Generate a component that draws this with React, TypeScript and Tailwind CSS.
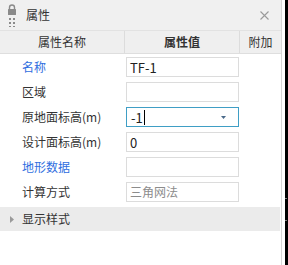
type Row = {
  label: string;
  value: string;
  blue?: boolean;
  kind?: "text" | "select" | "readonly";
};

const ROWS: Row[] = [
  { label: "名称", value: "TF-1", blue: true },
  { label: "区域", value: "" },
  { label: "原地面标高(m)", value: "-1", kind: "select" },
  { label: "设计面标高(m)", value: "0" },
  { label: "地形数据", value: "", blue: true },
  { label: "计算方式", value: "三角网法", kind: "readonly" },
];

const FONT = "font-['Microsoft_YaHei','Noto_Sans_CJK_SC',sans-serif]";

function LockGrip() {
  return (
    <svg width="10" height="24" viewBox="0 0 10 24" className="text-[#8a8a8a]" fill="currentColor">
      <path d="M2.5 6V4.5a2.5 2.5 0 0 1 5 0V6" fill="none" stroke="currentColor" strokeWidth="1.4" />
      <rect x="1" y="6" width="8" height="6" rx="0.5" />
      <rect x="2" y="15" width="2" height="2" />
      <rect x="6" y="15" width="2" height="2" />
      <rect x="2" y="19" width="2" height="2" />
      <rect x="6" y="19" width="2" height="2" />
      <rect x="2" y="23" width="2" height="1" />
      <rect x="6" y="23" width="2" height="1" />
    </svg>
  );
}

function ValueBox({ row }: { row: Row }) {
  if (row.kind === "select") {
    return (
      <div className="flex h-[20px] w-[113px] items-center border border-[#3f9ec5] bg-white pl-[4px] pr-[12px]">
        <span className="text-[13px] leading-none text-[#222]">{row.value}</span>
        <span className="ml-[1px] h-[15px] w-[1px] bg-black" />
        <span className="flex-1" />
        <svg width="5" height="3" viewBox="0 0 5 3">
          <path d="M0 0h5L2.5 3z" fill="#4a6a8a" />
        </svg>
      </div>
    );
  }
  return (
    <div className="flex h-[20px] w-[113px] items-center border border-[#dcdcdc] bg-white px-[3px]">
      <span
        className={`leading-none ${
          row.kind === "readonly" ? "text-[12px] text-[#8c8c8c]" : "text-[13px] text-[#222]"
        }`}
      >
        {row.value}
      </span>
    </div>
  );
}

export default function App() {
  return (
    <div className={`flex h-[265px] w-[288px] bg-white ${FONT}`}>
      <div className="flex w-[282px] flex-col border-r border-[#d6d6d6]">
        <div className="flex h-[31px] items-center border-b border-[#e2e2e2] bg-[#f0f0f0] pl-[7px] pr-[12px]">
          <LockGrip />
          <span className="ml-[9px] text-[12px] text-[#333]">属性</span>
          <span className="flex-1" />
          <svg width="9" height="9" viewBox="0 0 9 9">
            <path d="M0.5 0.5l8 8M8.5 0.5l-8 8" stroke="#9a9a9a" strokeWidth="1.1" />
          </svg>
        </div>

        <div className="flex h-[23px] border-b border-[#dedede] bg-[#efefef] text-[12px] text-[#333]">
          <div className="flex w-[125px] items-center justify-center border-r border-[#dcdcdc]">属性名称</div>
          <div className="flex w-[115px] items-center justify-center border-r border-[#dcdcdc] font-bold">
            属性值
          </div>
          <div className="flex flex-1 items-center justify-center">附加</div>
        </div>

        <div className="flex flex-col pt-[3px]">
          {ROWS.map((row) => (
            <div key={row.label} className="flex h-[25px] items-start">
              <div
                className={`flex h-[20px] w-[126px] items-center pl-[22px] text-[12px] ${
                  row.blue ? "text-[#2f6ee0]" : "text-[#333]"
                }`}
              >
                {row.label}
              </div>
              <ValueBox row={row} />
            </div>
          ))}
        </div>

        <div className="mr-[1px] flex h-[24px] items-center bg-[#ebebeb] pl-[10px]">
          <svg width="4" height="7" viewBox="0 0 4 7">
            <path d="M0 0l4 3.5L0 7z" fill="#9a9a9a" />
          </svg>
          <span className="ml-[8px] text-[12px] text-[#333]">显示样式</span>
        </div>
      </div>
      <div className="w-[3px] bg-white" />
      <div className="flex w-[3px] flex-col bg-black">
        <div className="h-[198px]" />
        <div className="h-[1px] w-[2px] bg-[#777]" />
        <div className="h-[21px]" />
        <div className="h-[1px] w-[2px] bg-[#777]" />
      </div>
    </div>
  );
}
